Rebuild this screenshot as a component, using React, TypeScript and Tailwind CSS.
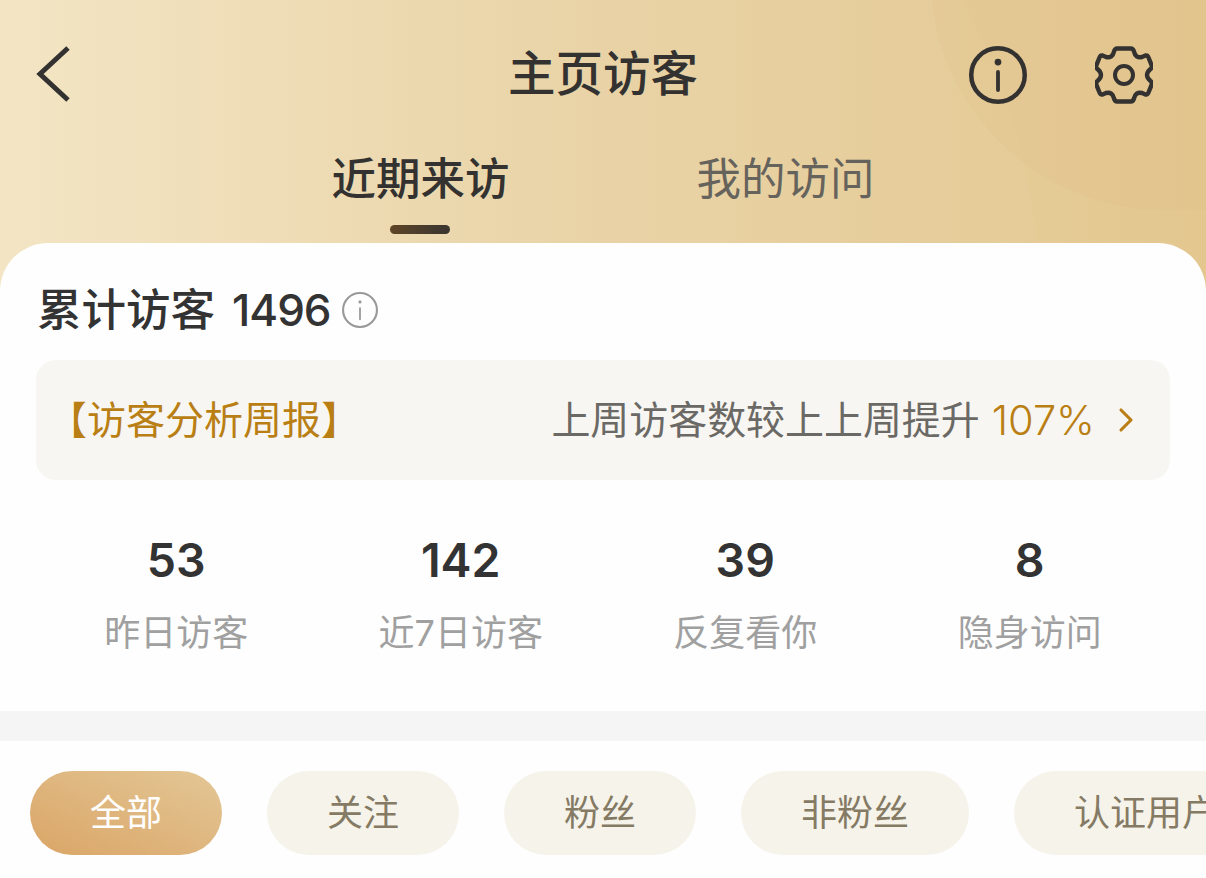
import { ChevronRight } from "lucide-react";

const FONT = "font-['Inter','Noto_Sans_CJK_SC',sans-serif]";

const STATS = [
    { value: "53", label: "昨日访客" },
    { value: "142", label: "近7日访客" },
    { value: "39", label: "反复看你" },
    { value: "8", label: "隐身访问" },
];

const FILTERS = ["关注", "粉丝", "非粉丝", "认证用户"];

function InfoIcon({ className, stroke }: { className: string; stroke: number }) {
    return (
        <svg viewBox="0 0 58 58" fill="none" className={className} stroke="currentColor">
            <circle cx="29" cy="29" r={29 - stroke / 2} strokeWidth={stroke} />
            <circle cx="29" cy="16" r={stroke * 0.75} fill="currentColor" stroke="none" />
            <path d="M29 26V44" strokeWidth={stroke * 0.85} strokeLinecap="round" />
        </svg>
    );
}

function GearIcon() {
    return (
        <svg viewBox="16 16 58 58" fill="none" stroke="currentColor" strokeWidth="4.4" strokeLinejoin="round" className="w-[58px] h-[58px]">
            <path d="M38 18.5H52Q54 18.5 55 21.5Q56.5 28.5 63 27L66.5 25.5Q68.5 25 69.5 27.5L72.5 35Q73.5 37.5 71.5 39Q64.5 45 71.5 51Q73.5 52.5 72.5 55L69.5 62.5Q68.5 65 66.5 64.5L63 63Q56.5 61.5 55 68.5Q54 71.5 52 71.5H38Q36 71.5 35 68.5Q33.5 61.5 27 63L23.5 64.5Q21.5 65 20.5 62.5L17.5 55Q16.5 52.5 18.5 51Q25.5 45 18.5 39Q16.5 37.5 17.5 35L20.5 27.5Q21.5 25 23.5 25.5L27 27Q33.5 28.5 35 21.5Q36 18.5 38 18.5Z" />
            <circle cx="45" cy="45" r="9" strokeWidth="4" />
        </svg>
    );
}

export default function App() {
    return (
        <div className={`${FONT} relative w-[1206px] h-[878px] overflow-hidden bg-[#fefefe]`}>
            {/* Gold header */}
            <div className="relative h-[290px] overflow-hidden bg-gradient-to-r from-[#f3e5c3] via-[#e9d3a5] to-[#e3c78f]">
                {/* Decorative curves */}
                <div className="absolute -top-[320px] -left-[200px] w-[1240px] h-[1240px] rounded-full bg-white/[0.02]" />
                <div className="absolute -top-[260px] left-[930px] w-[620px] h-[470px] rounded-full bg-[#dfc088]/20" />
                <div className="relative flex items-center justify-between h-[148px] pl-[36px] pr-[53px] text-[#333230]">
                    <svg viewBox="0 0 34 56" fill="none" className="w-[34px] h-[56px] -mt-[1px]">
                        <path d="M32 2L4 28L32 54" stroke="currentColor" strokeWidth="5" />
                    </svg>
                    <div className="flex items-center gap-[68px] mt-[2px]">
                        <InfoIcon className="w-[58px] h-[58px]" stroke={4.5} />
                        <GearIcon />
                    </div>
                    <h1 className="absolute left-0 right-0 top-[44px] text-center text-[47.5px] leading-[60px] font-medium">
                        主页访客
                    </h1>
                </div>
                <div className="relative -mt-[1px] flex justify-center gap-[187px] text-[44.5px] leading-[64px]">
                    <div className="flex flex-col items-center">
                        <span className="font-medium text-[#333230]">近期来访</span>
                        <span className="mt-[14px] w-[60px] h-[9px] rounded-full bg-gradient-to-r from-[#5d4526] to-[#3a3530]" />
                    </div>
                    <span className="text-[#66635d]">我的访问</span>
                </div>
            </div>

            {/* White sheet */}
            <div className="relative -mt-[47px] rounded-t-[48px] bg-[#fefefe]">
                <div className="flex items-center h-[134px] pl-[37px] text-[#333333]">
                    <span className="text-[44.5px] leading-none font-medium">累计访客</span>
                    <span className="ml-[17px] text-[44px] leading-none font-medium tracking-[-1px]">1496</span>
                    <InfoIcon className="ml-[11px] w-[36px] h-[36px] text-[#999999]" stroke={3.4} />
                </div>

                <div className="-mt-[17px] mx-[36px] flex items-center justify-between h-[120px] pl-[12px] pr-[24px] rounded-[20px] bg-[#f8f6f2] text-[39px]">
                    <span className="text-[#b97f14]">【访客分析周报】</span>
                    <div className="flex items-center text-[#6b6965]">
                        <span className="text-[38.95px]">上周访客数较上上周提升</span>
                        <span className="ml-[12px] text-[41.5px] font-light text-[#b97f14]">107%</span>
                        <ChevronRight size={40} strokeWidth={1.9} className="ml-[11px] text-[#b97f14]" />
                    </div>
                </div>

                <div className="grid grid-cols-4 mx-[34px] pt-[48px] h-[231px]">
                    {STATS.map(({ value, label }) => (
                        <div key={label} className="flex flex-col items-center">
                            <span className="text-[46.5px] leading-[64px] font-semibold text-[#333333]">{value}</span>
                            <span className="mt-[16px] text-[36px] leading-[50px] text-[#a0a0a0]">{label}</span>
                        </div>
                    ))}
                </div>

                <div className="h-[30px] bg-[#f5f5f5]" />

                <div className="flex gap-[45px] pt-[30px] pl-[30px] whitespace-nowrap text-[36px]">
                    <div className="flex items-center justify-center shrink-0 w-[192px] h-[84px] rounded-full bg-gradient-to-tr from-[#daa566] to-[#e3c796] text-white">
                        全部
                    </div>
                    {FILTERS.map((name) => (
                        <div key={name} className="flex items-center justify-center shrink-0 h-[84px] min-w-[192px] px-[60px] rounded-full bg-[#f5f3ea] text-[#857a63]">
                            {name}
                        </div>
                    ))}
                </div>
            </div>
        </div>
    );
}
